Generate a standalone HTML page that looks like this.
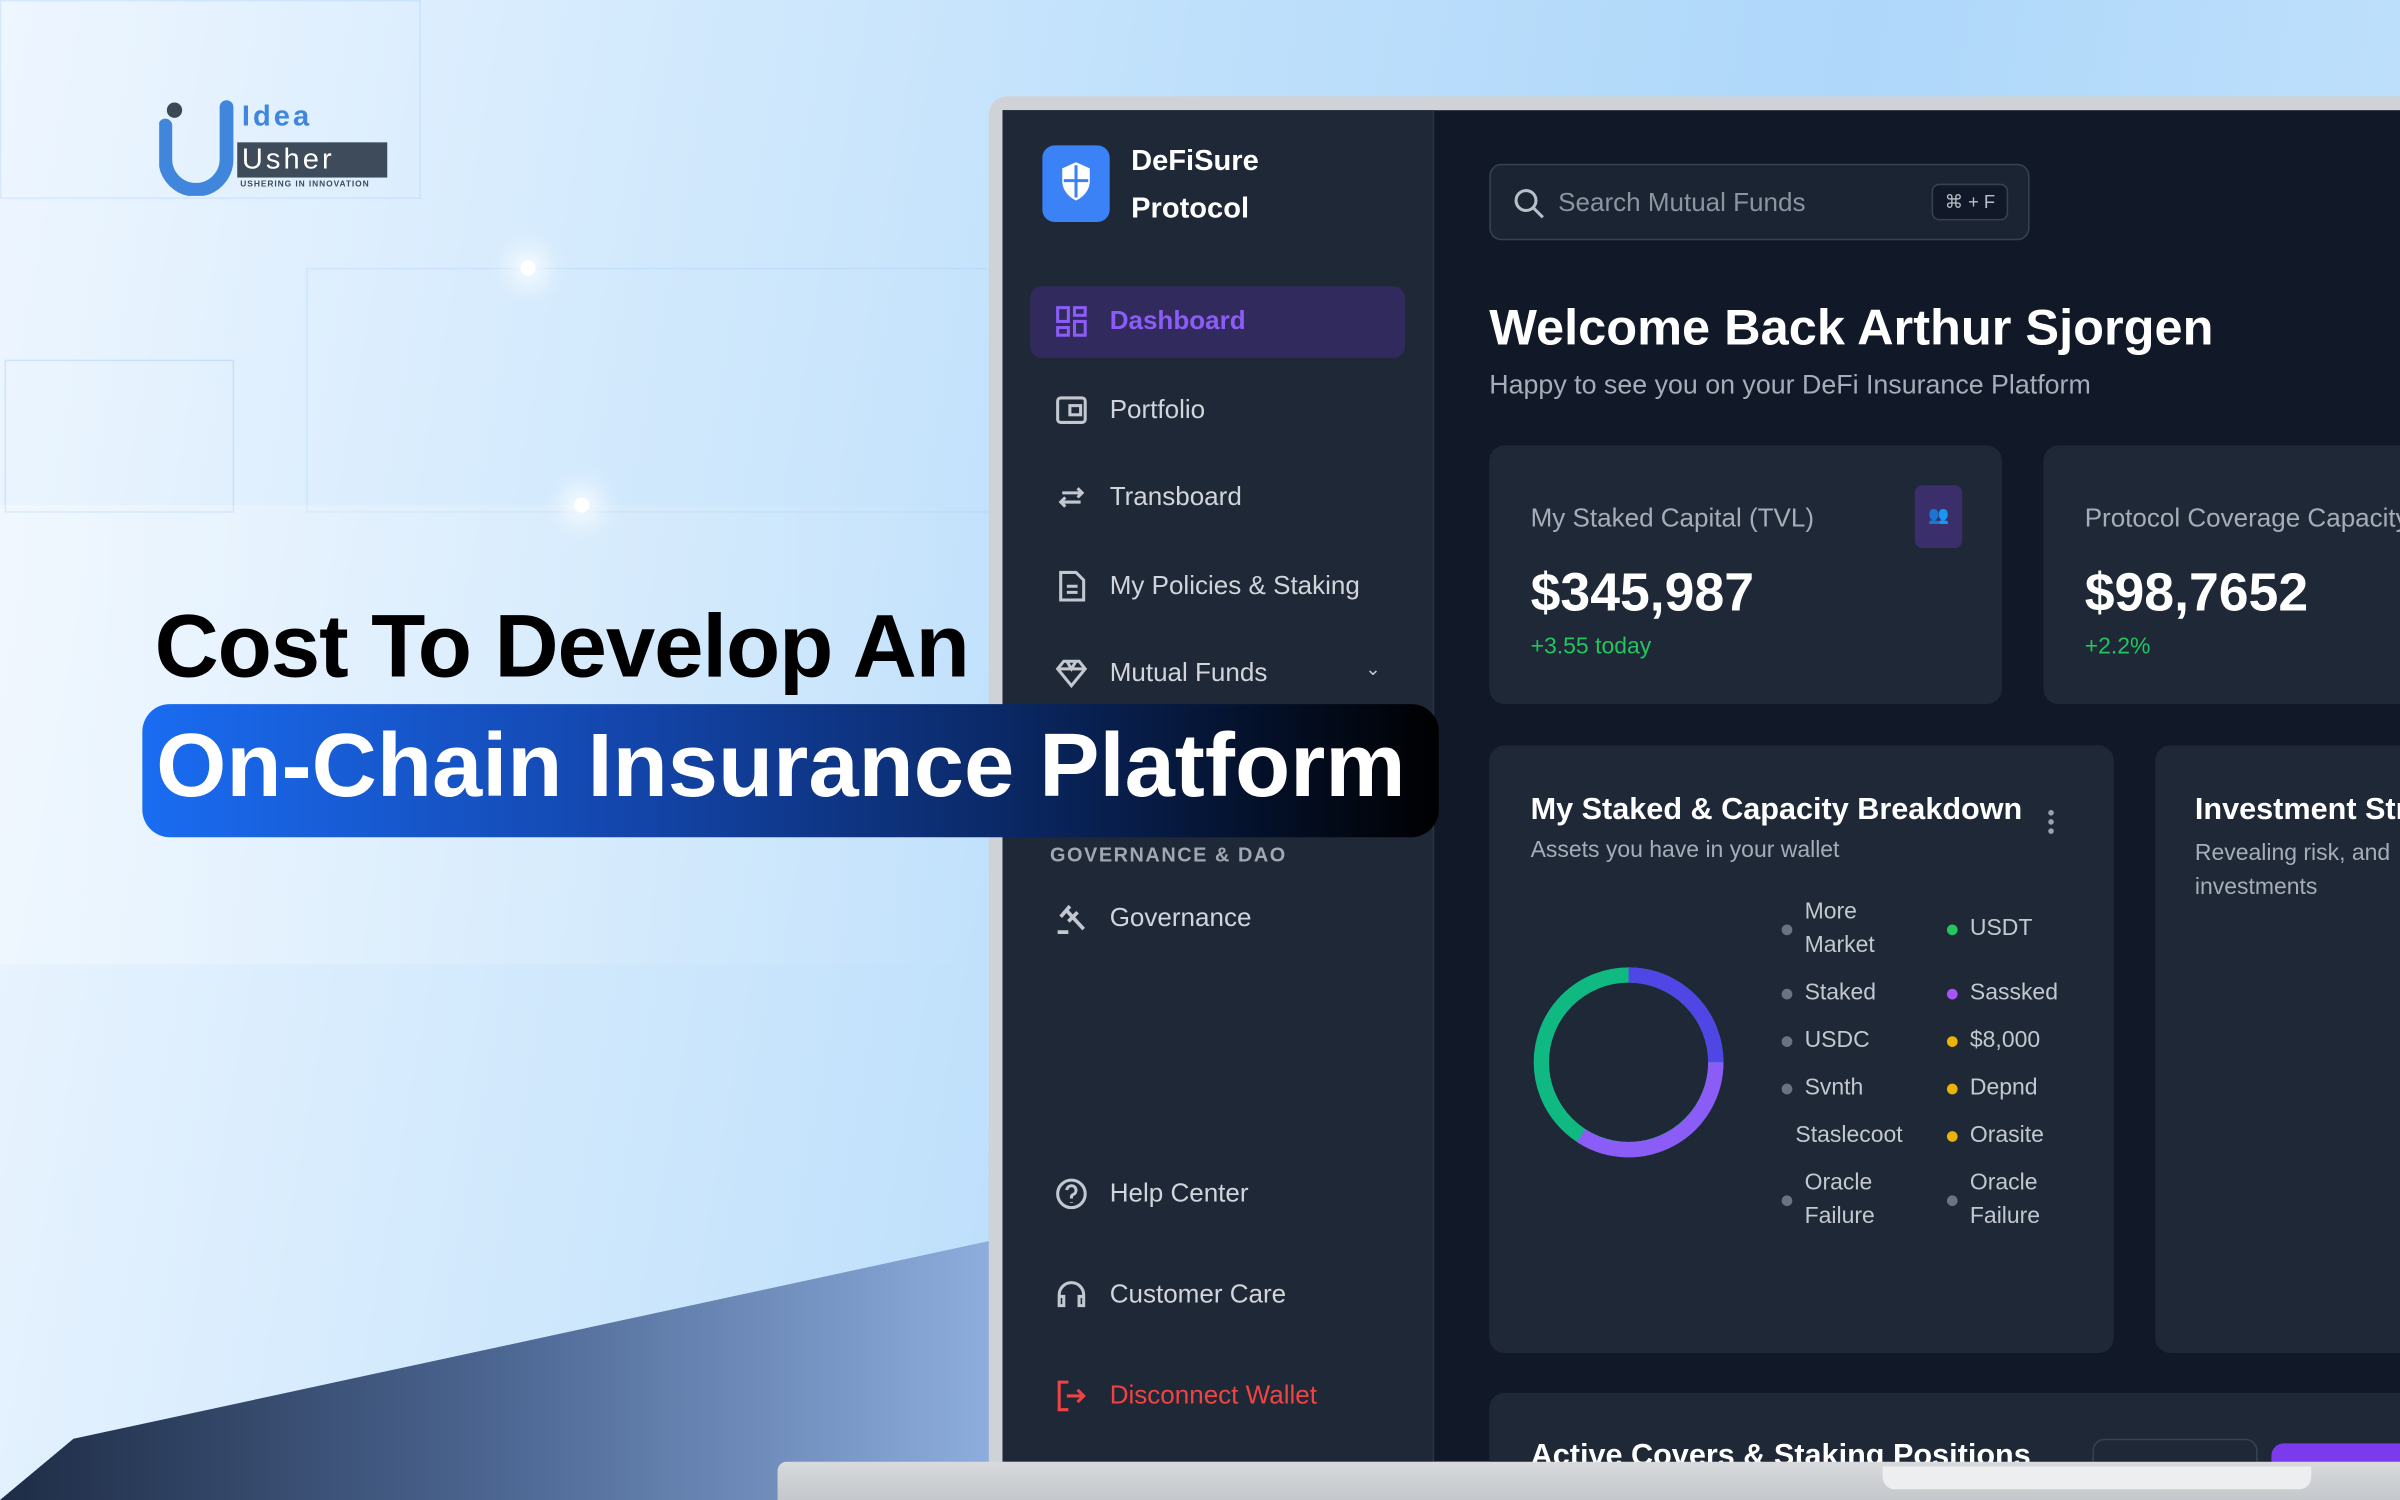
<!DOCTYPE html>
<html><head><meta charset="utf-8">
<style>
*{margin:0;padding:0;box-sizing:border-box}
html,body{width:2400px;height:1500px;overflow:hidden;background:#d6e9fb}
#w{position:absolute;left:0;top:0;width:1568px;height:980px;transform:scale(1.530612);transform-origin:0 0;font-family:"Liberation Sans",sans-serif;overflow:hidden;
background:linear-gradient(100deg,#eef6ff 0%,#d6ebfd 22%,#bfe0fb 45%,#aed7fa 70%,#c4e3fc 100%)}
.a{position:absolute}
.nav{position:absolute;left:689px;color:#d1d5db;font-size:17px;display:flex;align-items:center;gap:14px}
.nav svg{width:22px;height:22px}
.lg{position:absolute;font-size:15px;color:#c3c8d0;display:flex;align-items:center;gap:8px;line-height:22px}
.d{width:7px;height:7px;border-radius:50%;display:inline-block;flex:none}
</style></head><body><div id="w">
<!-- bg decor -->
<div class="a" style="left:0;top:0;width:275px;height:130px;border:1px solid rgba(120,180,240,.18)"></div>
<div class="a" style="left:3px;top:235px;width:150px;height:100px;border:1px solid rgba(90,160,230,.2)"></div>
<div class="a" style="left:200px;top:175px;width:450px;height:160px;border:1px solid rgba(120,180,240,.15)"></div>
<div class="a" style="left:340px;top:170px;width:10px;height:10px;border-radius:50%;background:#fff;box-shadow:0 0 16px 8px rgba(255,255,255,.8)"></div>
<div class="a" style="left:375px;top:325px;width:10px;height:10px;border-radius:50%;background:#fff;box-shadow:0 0 16px 8px rgba(255,255,255,.8)"></div>
<div class="a" style="left:0;top:330px;width:650px;height:300px;background:linear-gradient(90deg,rgba(255,255,255,.3),rgba(255,255,255,0))"></div>
<!-- bottom slant -->
<svg class="a" style="left:0;top:800px" width="660" height="180"><defs><linearGradient id="g1" x1="0" x2="1"><stop offset="0" stop-color="#1e2c45"/><stop offset=".5" stop-color="#4c6692"/><stop offset="1" stop-color="#8eaede"/></linearGradient></defs><polygon points="0,180 48,140 650,10 650,180" fill="url(#g1)"/></svg>
<!-- logo -->
<svg class="a" style="left:104px;top:62px" width="60" height="66"><circle cx="10" cy="10" r="5" fill="#3a4857"/><path d="M4 20 V42 a20 20 0 0 0 40 0 V8" stroke="#3f86dc" stroke-width="9" fill="none" stroke-linecap="round"/></svg>
<div class="a" style="left:158px;top:66px;font-size:19px;color:#3f86dc;letter-spacing:2px;font-weight:bold">Idea</div>
<div class="a" style="left:155px;top:93px;width:98px;height:23px;background:#3d4b5a;color:#fff;font-size:19px;letter-spacing:2px;padding-left:3px;line-height:23px">Usher</div>
<div class="a" style="left:157px;top:118px;font-size:5.5px;color:#3d4b5a;font-weight:bold;letter-spacing:.6px">USHERING IN INNOVATION</div>
<!-- laptop -->
<div class="a" style="left:646px;top:63px;width:930px;height:930px;background:#cfd2d6;border-radius:12px 0 0 0"></div>
<div class="a" style="left:655px;top:72px;width:913px;height:883px;background:#111827"></div>
<!-- sidebar -->
<div class="a" style="left:655px;top:72px;width:282px;height:883px;background:#1e2836;border-right:1px solid #2b3544"></div>
<div class="a" style="left:681px;top:95px;width:44px;height:50px;background:#3b82f6;border-radius:8px"></div>
<svg class="a" style="left:692px;top:104px" width="22" height="30"><path d="M11 2 L20 6 V14 C20 21 15 25 11 27 C7 25 2 21 2 14 V6 Z" fill="#fff"/><path d="M11 4 V25 M3 14 H19" stroke="#3b82f6" stroke-width="2"/></svg>
<div class="a" style="left:739px;top:90px;color:#fff;font-weight:bold;font-size:19px;line-height:31px">DeFiSure<br>Protocol</div>
<div class="a" style="left:673px;top:187px;width:245px;height:47px;background:#312a5c;border-radius:8px"></div>
<div class="nav" style="top:199px;color:#8b5cf6;font-weight:bold"><svg viewBox="0 0 22 22" fill="none" stroke="#8b5cf6" stroke-width="2"><rect x="2" y="2" width="7" height="9"/><rect x="13" y="2" width="7" height="5"/><rect x="2" y="15" width="7" height="5"/><rect x="13" y="11" width="7" height="9"/></svg>Dashboard</div>
<div class="nav" style="top:257px"><svg viewBox="0 0 22 22" fill="none" stroke="#c3c8d0" stroke-width="2"><rect x="2" y="3" width="18" height="16" rx="2"/><rect x="10" y="8" width="7" height="6"/></svg>Portfolio</div>
<div class="nav" style="top:314px"><svg viewBox="0 0 22 22" fill="none" stroke="#c3c8d0" stroke-width="2"><path d="M5 8 H18 M15 5 L18 8 L15 11 M17 14 H4 M7 11 L4 14 L7 17"/></svg>Transboard</div>
<div class="nav" style="top:372px"><svg viewBox="0 0 22 22" fill="none" stroke="#c3c8d0" stroke-width="2"><path d="M4 2 H14 L19 7 V20 H4 Z M8 11 H15 M8 15 H15"/></svg>My Policies &amp; Staking</div>
<div class="nav" style="top:429px"><svg viewBox="0 0 22 22" fill="none" stroke="#c3c8d0" stroke-width="2"><path d="M2 8 L6 3 H16 L20 8 L11 19 Z M2 8 H20 M8 3 L11 8 L14 3"/></svg>Mutual Funds</div>
<div class="a" style="left:892px;top:430px;color:#c3c8d0;font-size:12px">⌄</div>
<div class="a" style="left:686px;top:551px;color:#a0a7b2;font-size:13px;font-weight:bold;letter-spacing:1px">GOVERNANCE &amp; DAO</div>
<div class="nav" style="top:589px"><svg viewBox="0 0 22 22" fill="none" stroke="#c3c8d0" stroke-width="2.4"><path d="M4 10 L10 3 M9 13 L15 7 M8 6 L19 18 M2 20 H9"/></svg>Governance</div>
<div class="nav" style="top:769px"><svg viewBox="0 0 22 22" fill="none" stroke="#c3c8d0" stroke-width="2"><circle cx="11" cy="11" r="9"/><path d="M8 8.5 a3 3 0 1 1 4 3 c-1 .5-1 1-1 2.5 M11 16.5 v.5"/></svg>Help Center</div>
<div class="nav" style="top:835px"><svg viewBox="0 0 22 22" fill="none" stroke="#c3c8d0" stroke-width="2"><path d="M3 14 V11 a8 8 0 0 1 16 0 V14 M3 12 H6 V18 H3 Z M16 12 H19 V18 H16 Z"/></svg>Customer Care</div>
<div class="nav" style="top:901px;color:#ef4444"><svg viewBox="0 0 22 22" fill="none" stroke="#ef4444" stroke-width="2"><path d="M9 2 H3 V20 H9 M8 11 H19 M15 7 L19 11 L15 15"/></svg>Disconnect Wallet</div>
<!-- main -->
<div class="a" style="left:973px;top:107px;width:353px;height:50px;background:#1b2432;border:1px solid #374151;border-radius:8px"></div>
<svg class="a" style="left:988px;top:122px" width="22" height="22" fill="none" stroke="#b9bfc8" stroke-width="2"><circle cx="9" cy="9" r="6.5"/><path d="M14 14 L20 20"/></svg>
<div class="a" style="left:1018px;top:123px;color:#8c94a0;font-size:17px">Search Mutual Funds</div>
<div class="a" style="left:1262px;top:120px;width:50px;height:24px;border:1px solid #374151;background:#111827;border-radius:5px;color:#b9bfc8;font-size:12px;text-align:center;line-height:22px">⌘ + F</div>
<div class="a" style="left:973px;top:195px;color:#fff;font-weight:bold;font-size:33px">Welcome Back Arthur Sjorgen</div>
<div class="a" style="left:973px;top:241px;color:#a6adb8;font-size:17.5px">Happy to see you on your DeFi Insurance Platform</div>
<div class="a" style="left:973px;top:291px;width:335px;height:169px;background:#1e2836;border-radius:10px"></div>
<div class="a" style="left:1000px;top:329px;color:#a6adb8;font-size:17px">My Staked Capital (TVL)</div>
<div class="a" style="left:1251px;top:317px;width:31px;height:41px;background:#3b2f6b;border-radius:5px;color:#8b5cf6;font-size:11px;text-align:center;line-height:41px">👥</div>
<div class="a" style="left:1000px;top:368px;color:#fff;font-weight:bold;font-size:35px">$345,987</div>
<div class="a" style="left:1000px;top:414px;color:#22c55e;font-size:15px">+3.55 today</div>
<div class="a" style="left:1335px;top:291px;width:260px;height:169px;background:#1e2836;border-radius:10px"></div>
<div class="a" style="left:1362px;top:329px;color:#a6adb8;font-size:17px;white-space:nowrap">Protocol Coverage Capacity</div>
<div class="a" style="left:1362px;top:368px;color:#fff;font-weight:bold;font-size:35px">$98,7652</div>
<div class="a" style="left:1362px;top:414px;color:#22c55e;font-size:15px">+2.2%</div>
<div class="a" style="left:973px;top:487px;width:408px;height:397px;background:#1e2836;border-radius:10px"></div>
<div class="a" style="left:1000px;top:518px;color:#fff;font-weight:bold;font-size:20px">My Staked &amp; Capacity Breakdown</div>
<div class="a" style="left:1338px;top:528px;width:4px;height:18px;background:radial-gradient(circle,#9ca3af 1.6px,transparent 2px) 0 0/4px 6px"></div>
<div class="a" style="left:1000px;top:547px;color:#a6adb8;font-size:15px">Assets you have in your wallet</div>
<svg class="a" style="left:1000px;top:630px" width="130" height="130" fill="none" stroke-width="10"><circle cx="64" cy="64" r="57" stroke="#10b981"/><path d="M64 7 A57 57 0 0 1 121 64" stroke="#4f46e5"/><path d="M121 64 A57 57 0 0 1 33 112" stroke="#8b5cf6"/></svg>
<div class="lg" style="left:1164px;top:585px"><span class="d" style="background:#6b7280"></span>More<br>Market</div>
<div class="lg" style="left:1272px;top:596px"><span class="d" style="background:#22c55e"></span>USDT</div>
<div class="lg" style="left:1164px;top:638px"><span class="d" style="background:#6b7280"></span>Staked</div>
<div class="lg" style="left:1272px;top:638px"><span class="d" style="background:#a855f7"></span>Sassked</div>
<div class="lg" style="left:1164px;top:669px"><span class="d" style="background:#6b7280"></span>USDC</div>
<div class="lg" style="left:1272px;top:669px"><span class="d" style="background:#eab308"></span>$8,000</div>
<div class="lg" style="left:1164px;top:700px"><span class="d" style="background:#6b7280"></span>Svnth</div>
<div class="lg" style="left:1173px;top:731px">Staslecoot</div>
<div class="lg" style="left:1272px;top:700px"><span class="d" style="background:#eab308"></span>Depnd</div>
<div class="lg" style="left:1272px;top:731px"><span class="d" style="background:#eab308"></span>Orasite</div>
<div class="lg" style="left:1164px;top:762px"><span class="d" style="background:#6b7280"></span>Oracle<br>Failure</div>
<div class="lg" style="left:1272px;top:762px"><span class="d" style="background:#6b7280"></span>Oracle<br>Failure</div>
<div class="a" style="left:1408px;top:487px;width:200px;height:397px;background:#1e2836;border-radius:10px"></div>
<div class="a" style="left:1434px;top:518px;color:#fff;font-weight:bold;font-size:20px;white-space:nowrap">Investment Strategy</div>
<div class="a" style="left:1434px;top:547px;color:#a6adb8;font-size:15px;line-height:22px;white-space:nowrap">Revealing risk, and<br>investments</div>
<div class="a" style="left:973px;top:910px;width:620px;height:60px;background:#1e2836;border-radius:10px"></div>
<div class="a" style="left:1000px;top:940px;color:#fff;font-weight:bold;font-size:20px">Active Covers &amp; Staking Positions</div>
<div class="a" style="left:1367px;top:940px;width:108px;height:30px;border:1px solid #374151;border-radius:8px"></div>
<div class="a" style="left:1484px;top:943px;width:100px;height:30px;background:#7c3aed;border-radius:8px"></div>
<div class="a" style="left:508px;top:955px;width:1060px;height:25px;background:linear-gradient(#d8dadd,#c4c7cb);border-radius:6px 0 0 0"></div>
<div class="a" style="left:1230px;top:958px;width:280px;height:15px;background:#eceef0;border-radius:0 0 8px 8px"></div>
<!-- title -->
<div class="a" style="left:101px;top:389px;color:#000;font-weight:bold;font-size:58px;letter-spacing:-0.7px;white-space:nowrap">Cost To Develop An</div>
<div class="a" style="left:93px;top:460px;width:847px;height:87px;border-radius:18px;background:linear-gradient(90deg,#1a6cf2 0%,#1448b0 35%,#0b2a6a 65%,#000 100%)"></div>
<div class="a" style="left:102px;top:466px;color:#fff;font-weight:bold;font-size:59px;letter-spacing:0px;white-space:nowrap">On-Chain Insurance Platform</div>
</div></body></html>
